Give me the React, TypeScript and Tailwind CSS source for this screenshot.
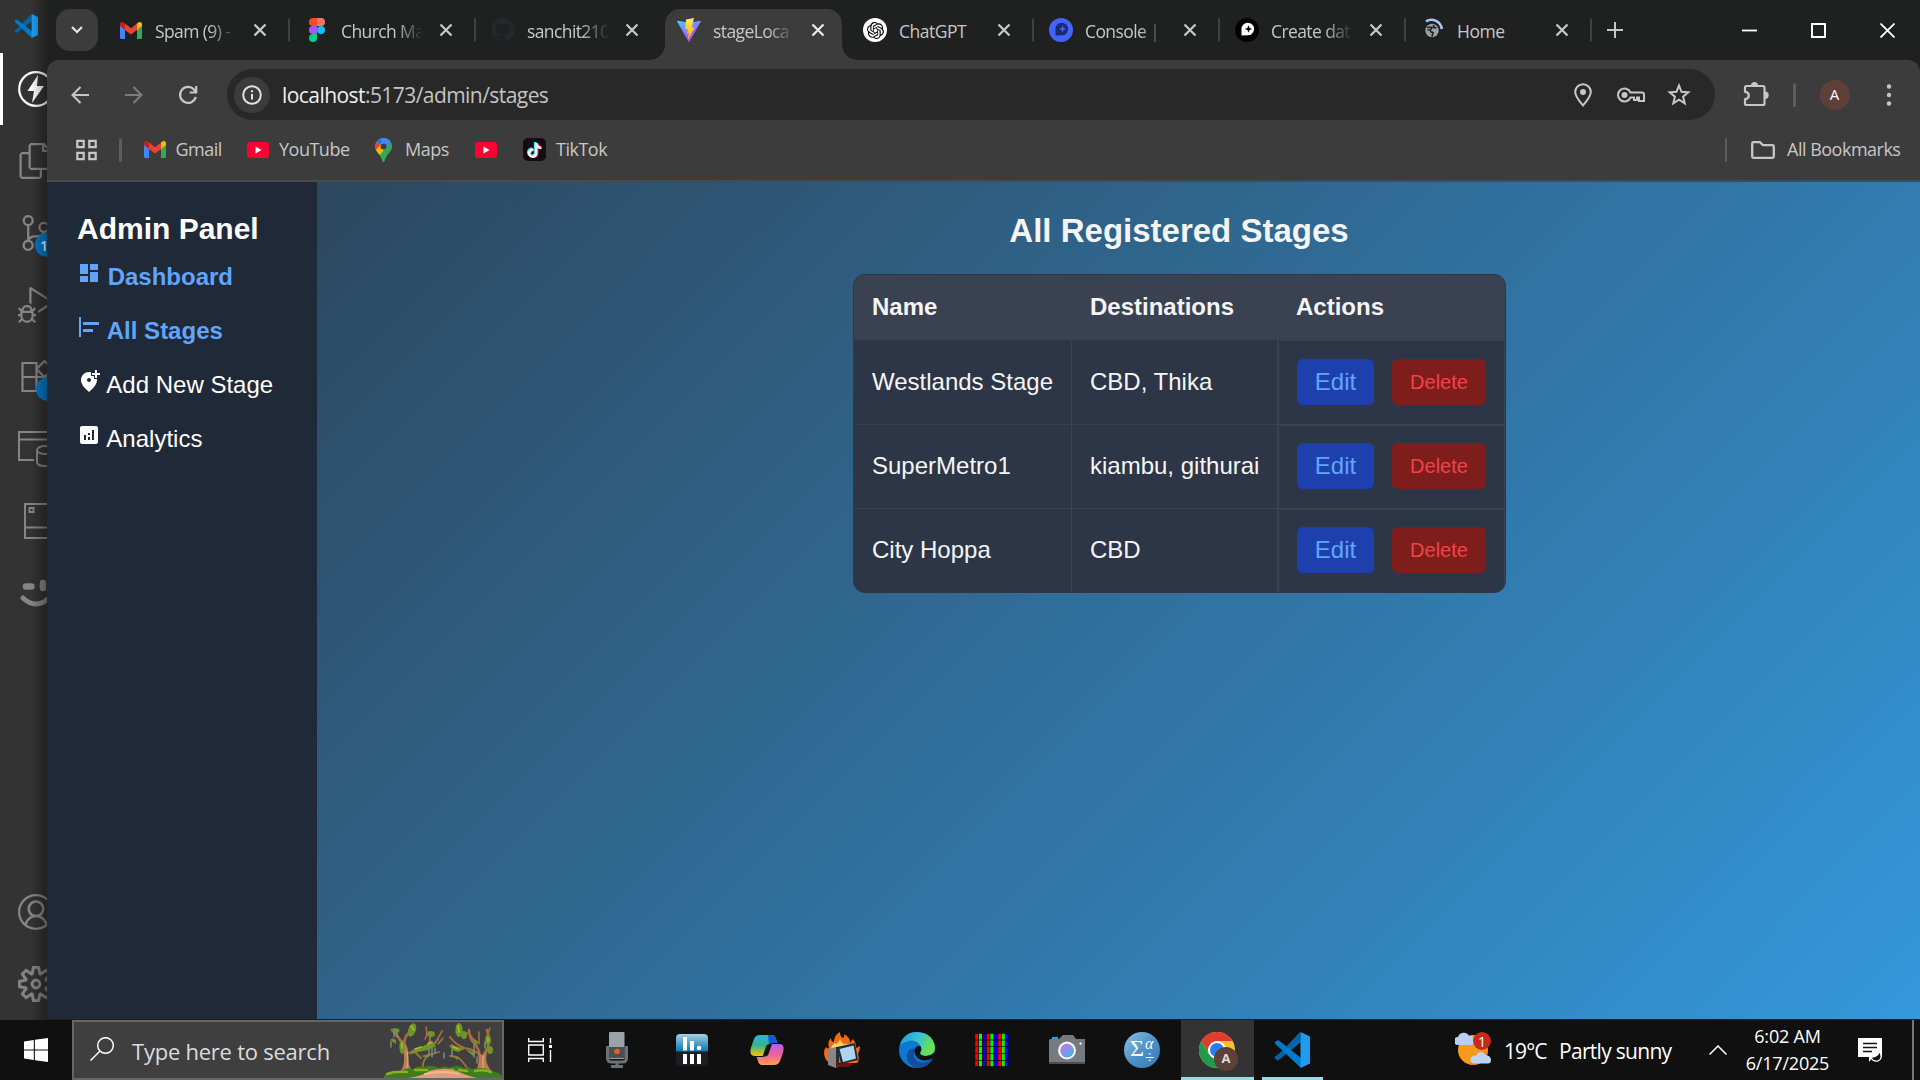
import React from "react";
import { VscFiles, VscSourceControl, VscDebugAlt, VscAccount, VscSettingsGear } from "react-icons/vsc";
import { MdDashboard, MdAlignHorizontalLeft, MdAddLocationAlt, MdAnalytics } from "react-icons/md";
import { FaGithub, FaTiktok } from "react-icons/fa";
import { SiOpenai } from "react-icons/si";

const VSCode = ({ className }: { className: string }) => (
  <svg viewBox="0 0 36 36" className={className}>
    <path d="M26 0 10 17 4 22.500 1 24.500Q0 26 2 27.500L4 28.500 27 10Z" fill="#0065a9" />
    <path d="M27 36 2.500 13Q0 11 1.200 10L3 8.500Q4 8 5.500 9L27 26Z" fill="#007acc" />
    <path d="M26.500 0 36 4.500V31.500L26.500 36Z" fill="#1f9cf0" />
  </svg>
);

const Gmail = () => (
  <svg viewBox="0 0 22 17" className="h-[17px] w-[22px] shrink-0">
    <path d="M0 3v12.500Q0 17 1.500 17H5V7z" fill="#4285f4" />
    <path d="M22 3v12.500q0 1.500-1.500 1.500H17V7z" fill="#34a853" />
    <path d="M17 1.500V8l5-4V2.500C22 0 19.500-.5 18 .7z" fill="#fbbc04" />
    <path d="M5 8V1.500l6 4.700 6-4.700V8l-6 4.500z" fill="#ea4335" />
    <path d="M0 2.500V4l5 4V1.500L4 .7C2.500-.5 0 0 0 2.500z" fill="#c5221f" />
  </svg>
);

const Figma = () => (
  <svg viewBox="0 0 16 24" className="h-6 w-4">
    <path d="M8 0H4a4 4 0 0 0 0 8h4z" fill="#f24e1e" />
    <path d="M8 0h4a4 4 0 0 1 0 8H8z" fill="#ff7262" />
    <path d="M8 8H4a4 4 0 0 0 0 8h4z" fill="#a259ff" />
    <circle cx="12" cy="12" r="4" fill="#1abcfe" />
    <path d="M4 16h4v4a4 4 0 1 1-4-4z" fill="#0acf83" />
  </svg>
);

const Vite = () => (
  <svg viewBox="0 0 24 24" className="h-6 w-6">
    <defs>
      <linearGradient id="vt" x1="0" y1="0" x2=".6" y2="1">
        <stop stopColor="#41d1ff" />
        <stop offset="1" stopColor="#bd34fe" />
      </linearGradient>
      <linearGradient id="vb" x1="0" y1="0" x2="0" y2="1">
        <stop stopColor="#ffea83" />
        <stop offset=".3" stopColor="#ffdd35" />
        <stop offset="1" stopColor="#ffa800" />
      </linearGradient>
    </defs>
    <path d="M23.800 3.600 12.600 23.600q-.6.800-1.200 0L.2 3.600Q-.1 2.600 1 2.700l11 2 11-2q1.100-.1.800.9z" fill="url(#vt)" />
    <path d="M17 0 9 1.600 8.300 11.500l2.600-.4-.9 4.400 2-.5-1.200 6 .6.200 6.400-12-3 .5z" fill="url(#vb)" />
  </svg>
);

const ChatGPT = () => (
  <span className="flex size-6 items-center justify-center rounded-full bg-white text-black">
    <SiOpenai size={17} />
  </span>
);

const MapPinBadge = ({ bg, fg, star }: { bg: string; fg: string; star: string }) => (
  <svg viewBox="0 0 24 24" className="h-6 w-6">
    <circle cx="12" cy="12" r="12" fill={bg} />
    <path d="M6.500 17.500V11a6.300 6.300 0 1 1 6.300 6.300z" fill={fg} />
    <path d="m13.500 7.300 1.100 2.600 2.600 1.100-2.600 1.100-1.100 2.600-1.100-2.600L9.800 11l2.600-1.100z" fill={star} />
  </svg>
);

const Loading = () => (
  <svg viewBox="0 0 24 24" className="h-6 w-6">
    <circle cx="11" cy="12.500" r="6.700" fill="#9aa0a6" />
    <path d="M6 9.500q3-.5 5 0l-1.500 2.500h-3M9 13.500l3 1-1 4M12.500 7l.5 2.500 2.500.5" stroke="#202222" strokeWidth="1.700" fill="none" />
    <path d="M5 3.300A10.500 10.500 0 0 1 20.800 11" stroke="#a8c7fa" strokeWidth="2.600" fill="none" />
  </svg>
);

const YouTube = () => (
  <svg viewBox="0 0 22 16" className="h-4 w-[22px] shrink-0">
    <rect width="22" height="16" rx="3" fill="#ff0033" />
    <path d="m8.500 4.500 6 3.500-6 3.500z" fill="#fff" />
  </svg>
);

const Maps = () => (
  <svg viewBox="0 0 17 24" className="h-6 w-[17px] shrink-0">
    <defs>
      <clipPath id="mp">
        <path d="M8.500 0A8.500 8.500 0 0 0 0 8.500c0 5 5.500 7 7.300 14q1.200 3 2.400 0C11.500 15.500 17 13.500 17 8.500A8.500 8.500 0 0 0 8.500 0z" />
      </clipPath>
    </defs>
    <g clipPath="url(#mp)">
      <path d="M0 0h17v24H0z" fill="#34a853" />
      <path d="M0 3 8 8 2 16H0z" fill="#ea4335" />
      <path d="M3 0h14v4L8 8 1.500 3z" fill="#4285f4" />
      <path d="M0 0h5l3 8-6-5z" fill="#1a73e8" />
      <path d="M12 8 4 18l-4-5 7-8z" fill="#fbbc04" />
      <path d="M17 4 4 19v6h13z" fill="#34a853" />
      <path d="m11 0 6 4-6 6z" fill="#4285f4" />
    </g>
    <circle cx="8.500" cy="8.500" r="3" fill="#3c3c3c" />
  </svg>
);

const TikTok = () => (
  <span className="relative flex size-[23px] shrink-0 items-center justify-center rounded-[5px] bg-[#150b12]">
    <FaTiktok size={15} className="absolute top-[4px] left-[3px] text-[#25f4ee]" />
    <FaTiktok size={15} className="absolute top-[5px] left-[4.500px] text-[#fe2c55]" />
    <FaTiktok size={15} className="absolute top-[4.500px] left-[3.700px] text-white" />
  </span>
);

const Cross = ({ active }: { active?: boolean }) => (
  <svg viewBox="0 0 14 14" className={active ? "h-3.5 w-3.5 shrink-0 text-[#e8e8e8]" : "h-3.5 w-3.5 shrink-0 text-[#c7c7c7]"}>
    <path d="m1.500 1.500 11 11m0-11-11 11" stroke="currentColor" strokeWidth="2.300" />
  </svg>
);

const tabs = [
  { label: "Spam (9) -", icon: <Gmail />, sep: true },
  { label: "Church Ma", icon: <Figma />, sep: true },
  { label: "sanchit210", icon: <FaGithub size={24} className="text-[#24292f]" />, sep: false },
  { label: "stageLoca", icon: <Vite />, sep: false, active: true },
  { label: "ChatGPT", icon: <ChatGPT />, sep: true },
  { label: "Console |", icon: <MapPinBadge bg="#4264fb" fg="#1d2a6b" star="#4264fb" />, sep: true },
  { label: "Create dat", icon: <MapPinBadge bg="#000" fg="#fff" star="#000" />, sep: true },
  { label: "Home", icon: <Loading />, sep: true },
];

const TabStrip = () => (
  <div className="flex h-[60px] bg-[#1f2120]">
    <div className="mt-[9px] ml-[9px] flex size-[42px] items-center justify-center rounded-[14px] bg-[#3c3c3c]">
      <svg viewBox="0 0 12 8" className="h-2 w-3">
        <path d="m1 1 5 5 5-5" stroke="#e6e6e6" strokeWidth="2.200" fill="none" />
      </svg>
    </div>
    <div className="ml-[6px] flex">
      {tabs.map((t) => (
        <div key={t.label} className="relative flex h-[60px] w-[186px] items-center pl-[15px]">
          {t.active && (
            <>
              <span className="absolute top-[9px] bottom-0 left-[3px] w-[177px] rounded-t-[15px] bg-[#3c3c3c]" />
              <span className="absolute bottom-0 left-[-12px] size-[15px] bg-[radial-gradient(circle_at_0_0,transparent_14.5px,#3c3c3c_15px)]" />
              <span className="absolute bottom-0 left-[180px] size-[15px] bg-[radial-gradient(circle_at_100%_0,transparent_14.5px,#3c3c3c_15px)]" />
            </>
          )}
          <span className="relative flex w-6 justify-center">{t.icon}</span>
          <span
            className={
              t.label.length > 8
                ? "relative ml-3 w-[82px] pt-[2px] text-[17.5px] leading-[26px] tracking-[-0.6px] whitespace-pre text-[#c7c7c7] [mask-image:linear-gradient(90deg,#000_66%,transparent_100%)]"
                : "relative ml-3 w-[82px] pt-[2px] text-[17.5px] leading-[26px] tracking-[-0.5px] whitespace-pre text-[#c7c7c7]"
            }
          >
            {t.label}
          </span>
          <span className="relative ml-[16px]">
            <Cross active={t.active} />
          </span>
          {t.sep && <span className="absolute top-[18px] right-0 h-6 w-[2.500px] rounded bg-[#3f4140]" />}
        </div>
      ))}
    </div>
    <svg viewBox="0 0 16 16" className="mt-[22px] ml-[15px] h-4 w-4">
      <path d="M8 0v16M0 8h16" stroke="#c7c7c7" strokeWidth="2" />
    </svg>
    <div className="mt-[23px] mr-[25px] ml-auto flex gap-[54px]">
      <svg viewBox="0 0 15 15" className="h-[15px] w-[15px]"><path d="M0 7.500h15" stroke="#fff" strokeWidth="1.800" /></svg>
      <svg viewBox="0 0 15 15" className="h-[15px] w-[15px]"><path d="M1 1h13v13H1z" stroke="#fff" strokeWidth="2" fill="none" /></svg>
      <svg viewBox="0 0 15 15" className="h-[15px] w-[15px]"><path d="m.5.500 14 14m0-14-14 14" stroke="#fff" strokeWidth="1.800" /></svg>
    </div>
  </div>
);

const Toolbar = () => (
  <div className="flex h-[69px] items-start pt-[9px]">
    <div className="flex h-[51px] items-center gap-[35.5px] pl-[24px]">
      <svg viewBox="0 0 18 18" className="h-[18px] w-[18px]"><path d="M18 9H1.500M9.500 1 1.500 9l8 8" stroke="#c7c7c7" strokeWidth="2.100" fill="none" /></svg>
      <svg viewBox="0 0 18 18" className="h-[18px] w-[18px]"><path d="M0 9h16.500M8.500 1l8 8-8 8" stroke="#7c7c7c" strokeWidth="2.100" fill="none" /></svg>
      <svg viewBox="0 0 20 20" className="h-5 w-5"><path d="M17.800 12A8 8 0 1 1 16 4.500L18 7M18.200 1v6.500h-6.500" stroke="#c7c7c7" strokeWidth="2.200" fill="none" /></svg>
    </div>
    <div className="ml-[29px] flex h-[51px] w-[1488px] items-center rounded-full bg-[#282828] pr-[24px] pl-[7px]">
      <span className="flex size-9 items-center justify-center rounded-full bg-[#3c3c3c]">
        <svg viewBox="0 0 20 20" className="h-5 w-5">
          <circle cx="10" cy="10" r="8.800" stroke="#e3e3e3" strokeWidth="2" fill="none" />
          <path d="M10 9v5.500M10 5.200v2" stroke="#e3e3e3" strokeWidth="2" />
        </svg>
      </span>
      <span className="ml-[12px] text-[21px] leading-[30px] tracking-[-0.56px] text-[#c4c4c4]">
        <span className="text-[#f0f0f0]">localhost</span>:5173/admin/stages
      </span>
      <div className="ml-auto flex items-center">
        <svg viewBox="0 0 18 24" className="h-6 w-[18px]">
          <path d="M9 22.500C5 17.500 1.200 13.500 1.200 9a7.800 7.800 0 0 1 15.600 0c0 4.500-3.800 8.500-7.800 13.500z" stroke="#c7c7c7" strokeWidth="2" fill="none" />
          <circle cx="9" cy="9" r="3" fill="#c7c7c7" />
        </svg>
        <svg viewBox="0 0 28 16" className="ml-[25px] h-4 w-7">
          <path d="M13.500 5.500H25q2 0 2 2V14h-5v-3.500h-2V13h-3v-2.500h-3.500A6.500 6.500 0 1 1 13.500 5.500z" stroke="#c7c7c7" strokeWidth="2" fill="none" />
          <circle cx="7.500" cy="8" r="3" fill="#c7c7c7" />
        </svg>
        <svg viewBox="0 0 24 24" className="ml-[22px] h-[25px] w-[24px]">
          <path d="m12 3 2.500 6.300 6.800.5-5.200 4.400 1.600 6.600L12 17.200l-5.700 3.600 1.600-6.600-5.200-4.400 6.800-.5z" stroke="#c7c7c7" strokeWidth="2" fill="none" />
        </svg>
      </div>
    </div>
    <div className="flex h-[51px] items-center">
      <svg viewBox="0 0 26 26" className="-mt-[2px] ml-[28px] h-[26px] w-[26px]">
        <path d="M3.500 5H20q1.500 0 1.500 1.500v16q0 1.500-1.500 1.500H3.500Q2 24 2 22.500v-4.200q3.800-.8 3.800-3.900T2 10.600V6.500Q2 5 3.500 5z" stroke="#c7c7c7" strokeWidth="2.200" fill="none" />
        <path d="M8 4.500a3.500 3.500 0 0 1 7 0zM22 10.500a3.700 3.700 0 0 1 0 7.400z" fill="#c7c7c7" />
      </svg>
      <span className="ml-[24px] h-6 w-[2.500px] rounded bg-[#5c5c5c]" />
      <span className="ml-[24px] flex size-[30px] items-center justify-center rounded-full bg-[#5d4037] text-[15px] text-white">A</span>
      <svg viewBox="0 0 6 22" className="ml-[36px] h-[22px] w-[6px] fill-[#c7c7c7]">
        <circle cx="3" cy="2.500" r="2.200" />
        <circle cx="3" cy="11" r="2.200" />
        <circle cx="3" cy="19.500" r="2.200" />
      </svg>
    </div>
  </div>
);

const Bookmarks = () => (
  <div className="flex h-[51px] items-center pr-[19px] pb-[10px] pl-[29px] text-[18px] tracking-[-0.5px] text-[#c7c7c7]">
    <svg viewBox="0 0 21 21" className="h-[22px] w-[21px]">
      <path d="M1.300 1.300h6.400v6.400H1.300zM13.300 1.300h6.400v6.400h-6.400zM1.300 13.300h6.400v6.400H1.300zM13.300 13.300h6.400v6.400h-6.400z" stroke="#c7c7c7" strokeWidth="2.200" fill="none" />
    </svg>
    <span className="mr-[22.5px] ml-[22px] h-6 w-[2.500px] rounded bg-[#5c5c5c]" />
    <Gmail />
    <span className="ml-[9.5px] w-[71.5px] pb-px">Gmail</span>
    <YouTube />
    <span className="ml-[10px] w-[96px] pb-px">YouTube</span>
    <Maps />
    <span className="ml-[13px] w-[70px] pb-px">Maps</span>
    <YouTube />
    <span className="w-[26px]" />
    <TikTok />
    <span className="ml-[10px] pb-px tracking-[-0.5px]">TikTok</span>
    <span className="ml-auto h-6 w-[2.500px] rounded bg-[#5c5c5c]" />
    <svg viewBox="0 0 24 18" className="mr-[12px] ml-[24px] h-[18px] w-6">
      <path d="M1.200 2.500q0-1.300 1.300-1.300H9l3 3h9.500q1.300 0 1.300 1.300v10q0 1.300-1.300 1.300h-19q-1.300 0-1.300-1.300z" stroke="#c7c7c7" strokeWidth="2.300" fill="none" />
    </svg>
    <span className="w-[114px] pb-px whitespace-nowrap">All Bookmarks</span>
  </div>
);

const nav = [
  { label: "Dashboard", Icon: MdDashboard, on: true },
  { label: "All Stages", Icon: MdAlignHorizontalLeft, on: true },
  { label: "Add New Stage", Icon: MdAddLocationAlt, on: false },
  { label: "Analytics", Icon: MdAnalytics, on: false },
];

const stages = [
  { name: "Westlands Stage", dest: "CBD, Thika" },
  { name: "SuperMetro1", dest: "kiambu, githurai" },
  { name: "City Hoppa", dest: "CBD" },
];

const Page = () => (
  <div className="flex h-[837px] bg-linear-[135deg,#2c3e50,#3498db] font-['Liberation_Sans',Arial,sans-serif] text-[24px]">
    <aside className="w-[270px] bg-[#1f2937] pt-[29px] pl-[30px]">
      <h2 className="text-[30px] leading-[36px] font-bold text-white">Admin Panel</h2>
      <nav className="mt-[3px] flex flex-col">
        {nav.map(({ label, Icon, on }) => (
          <a
            key={label}
            className={on ? "h-[54px] leading-[54px] font-bold whitespace-nowrap text-[#60a5fa]" : "h-[54px] leading-[54px] whitespace-nowrap text-white"}
          >
            <Icon size={24} className="inline align-baseline" /> {label}
          </a>
        ))}
      </nav>
    </aside>
    <main className="flex flex-1 flex-col items-center pt-[30px] pr-[-1px] text-[#f5f5f5]">
      <h1 className="ml-[121px] text-[33px] leading-[38px] font-bold">All Registered Stages</h1>
      <div className="mt-[24px] ml-[122px] w-[653px] overflow-hidden rounded-[12px] border border-[#2d3748] bg-[#2d3748]">
        <div className="grid h-[65px] grid-cols-[218px_206px_1fr] items-center bg-[#3a4252] pb-[2px] font-bold">
          <span className="pl-[18px]">Name</span>
          <span className="pl-[18px]">Destinations</span>
          <span className="pl-[18px]">Actions</span>
        </div>
        {stages.map((s, i) => (
          <div key={s.name} className="grid h-[84px] grid-cols-[218px_205px_1fr] bg-[#2d3647]">
            <span className={i ? "flex items-center border-t border-r border-[#3a4252] pb-[2px] pl-[18px]" : "flex items-center border-r border-[#3a4252] pb-px pl-[18px]"}>{s.name}</span>
            <span className={i ? "flex items-center border-t border-[#3a4252] pb-[2px] pl-[18px]" : "flex items-center pb-px pl-[18px]"}>{s.dest}</span>
            <span className={i === 0 ? "flex items-start gap-[18px] border-t border-r border-l-2 border-[#3a4252] pt-[18px] pl-[18px]" : "flex items-start gap-[18px] border-t-2 border-r border-l-2 border-[#3a4252] pt-[17px] pl-[18px]"}>
              <span className="flex h-[46px] w-[77px] items-center justify-center rounded-[6px] bg-[#1e40af] text-[#60a5fa]">Edit</span>
              <span className="flex h-[46px] w-[94px] items-center justify-center rounded-[6px] bg-[#7f1d1d] text-[20px] text-[#ef4444]">Delete</span>
            </span>
          </div>
        ))}
      </div>
    </main>
  </div>
);

const ActivityBar = () => (
  <div className="relative flex h-[1020px] w-[47px] shrink-0 flex-col overflow-hidden bg-[#333333] text-[#858585]">
    <div className="flex h-[53px] items-center pb-px pl-[14px]"><VSCode className="h-6 w-6 shrink-0" /></div>
    <div className="flex h-[72px] items-center border-l-[3px] border-white pl-[15px]">
      <svg viewBox="0 0 36 36" className="h-9 w-9 shrink-0">
        <circle cx="18" cy="18" r="16.800" stroke="#fff" strokeWidth="2.200" fill="none" />
        <path d="M20 4 9.500 20H16l-2 12 12-17h-7z" fill="#fff" />
      </svg>
    </div>
    <div className="flex h-[72px] items-center pl-[18px]"><VscFiles size={36} className="shrink-0" /></div>
    <div className="relative flex h-[72px] items-center pl-[18px]">
      <VscSourceControl size={36} className="shrink-0" />
      <span className="absolute top-[36px] left-[35px] flex size-6 items-center rounded-full bg-[#007acc] pl-[5px] text-[14px] font-semibold text-white">1</span>
    </div>
    <div className="flex h-[72px] items-center pl-[18px]"><VscDebugAlt size={36} className="shrink-0" /></div>
    <div className="relative flex h-[72px] items-center pl-[21px]">
      <svg viewBox="0 0 36 36" className="h-9 w-9 shrink-0" fill="none" stroke="#858585" strokeWidth="2.200">
        <path d="M1.500 4h14v28h-14zM1.500 18h28v14h-14V18M23.500 2l8 8-8 8-8-8z" />
      </svg>
      <span className="absolute top-[36px] left-[36px] size-6 rounded-full bg-[#007acc]" />
    </div>
    <div className="flex h-[72px] items-center pl-[18px]">
      <svg viewBox="0 0 36 36" className="h-9 w-9 shrink-0" fill="none" stroke="#858585" strokeWidth="2">
        <path d="M16 29H1V1h34v14M1 8.500h34" />
        <ellipse cx="27" cy="19" rx="8" ry="4" />
        <path d="M19 19v12q0 4 8 4t8-4V19" />
      </svg>
    </div>
    <div className="flex h-[72px] items-center pl-[24px]">
      <svg viewBox="0 0 36 36" className="h-9 w-9 shrink-0" fill="none" stroke="#858585" strokeWidth="2">
        <path d="M1 1h34v34H1zM1 24.500h34M5.500 5h4v4h-4z" />
      </svg>
    </div>
    <div className="flex h-[72px] items-center pb-[7px] pl-[18px]">
      <svg viewBox="0 0 36 36" className="h-9 w-9 shrink-0" fill="none" stroke="#858585" strokeLinecap="round">
        <path d="M8 14.500h5.500M25 11v5" strokeWidth="6.500" />
        <path d="M5 26q13 12 26 0" strokeWidth="5" />
      </svg>
    </div>
    <div className="mt-auto flex h-[72px] items-center pl-[18px]"><VscAccount size={36} className="shrink-0" /></div>
    <div className="flex h-[72px] items-center pl-[18px]">
      <VscSettingsGear size={36} className="shrink-0" stroke="#858585" strokeWidth={0.3} />
    </div>
    <span className="absolute inset-y-0 right-0 w-4 bg-linear-to-r from-transparent to-black/35" />
  </div>
);

const Swamp = () => (
  <svg viewBox="0 0 120 56" className="mr-[-1px] ml-auto h-[56px] w-[120px] self-end" fill="none" strokeLinecap="round" strokeLinejoin="round">
    <g stroke="#a86b42">
      <path d="M40 46q-1-8 6-13l10-3M38 36l-5-5M84 46q-5-8-10-11l-7-1" strokeWidth="1.800" />
      <path d="M24 32q7-4 12-5 14-1 19-10M40 26q8-3 7-11M96 32q-6-4-10-5-12-2-19-12M80 27q-8-1-11-4" strokeWidth="2" />
      <path d="M21 26Q16 14 9 8M21 24q0-10 6-14M97 34q-2-10-7-14-4-6-4-12M101 32q8-10 3-24" strokeWidth="2.600" />
      <path d="M42 17q3-4 1-12M54 18l5-9M60 16l-5 6M92 20l-6-9h-6M104 14l3-8M96 22V10" strokeWidth="1.600" />
    </g>
    <path d="M17 50q5-6 4-16-1-7-3-12l4-1q4 6 3 12 0 12 5 17zM93 49q4-8 2-19l4 3 5-3q-3 10 4 19z" fill="#bd7c52" />
    <path d="M23 48q3-8 1-18M100 48V34" stroke="#dba37a" strokeWidth="1.400" />
    <g fill="#6f9428">
      <ellipse cx="29" cy="8" rx="3.800" ry="7" transform="rotate(20 29 8)" />
      <ellipse cx="19" cy="25" rx="2.600" ry="7" />
      <ellipse cx="76" cy="8" rx="3.600" ry="7" />
      <ellipse cx="81" cy="13" rx="3" ry="4" />
      <ellipse cx="48" cy="12" rx="4" ry="3" />
      <ellipse cx="105" cy="18" rx="3" ry="4.500" />
      <ellipse cx="107" cy="28" rx="3" ry="4" />
      <path d="M26 33q6-7 14-9l10-4 3 4-8 4-10 2zM8 8q4-4 9 0l-2 3zM7 18q2-3 6 0v4zM66 23q8 1 14 4l-4 3q-8-1-10-7zM82 27l10 4-2 3zM90 16l6 4-3 3zM38 34l8-2-2 4zM70 34l6 1-2 3z" />
    </g>
    <g stroke="#b3b52e" strokeWidth="1.600">
      <path d="M28 4l3 4M75 4l1 6M32 27l6-2M45 22l4-2M19 21v5M105 16v3M70 25l5 2" />
    </g>
    <g stroke="#7f9c86" strokeWidth="1.300">
      <path d="M11 10v5M14 9v6M8 20v5M46 27v7M49 26v9M52 26v5M61 31v5M69 28v6M91 23v12M94 35v6M102 20v6" />
    </g>
    <path d="M0 56q3-8 18-7 4-4 12-2 6-4 12-2 6-3 14 1 6-3 10 0 8-4 15 0 5-2 8 1 14-3 18 2 11 1 13 7z" fill="#3d7d1e" />
    <path d="M4 52q8-3 20-2M32 48h12M60 48h10M76 48l8 1M92 49q10-2 16 1" stroke="#92aa25" strokeWidth="2.600" />
    <path d="M26 56q16-3 20-7 14-4 28 0 8 4 20 7z" fill="#e09b78" />
    <path d="M42 52q18-4 34 0" stroke="#f2b796" strokeWidth="1.800" />
  </svg>
);

const Taskbar = () => (
  <div className="flex h-[60px] bg-[#101010] text-white">
    <div className="flex w-[72px] items-center justify-center">
      <svg viewBox="0 0 24 24" className="h-6 w-6" fill="#fff">
        <path d="M0 3.400 9.800 2v9.400H0zM10.900 1.800 24 0v11.400H10.900zM0 12.500h9.800V22L0 20.600zM10.900 12.500H24V24l-13.100-1.800z" />
      </svg>
    </div>
    <div className="flex w-[432px] items-center border-2 border-[#666] bg-[#3f3f3f] pl-[16px]">
      <svg viewBox="0 0 24 24" className="-mt-[2px] h-6 w-6">
        <circle cx="15.500" cy="8.500" r="7.800" stroke="#fff" strokeWidth="1.500" fill="none" />
        <path d="M10 14 .5 23.500" stroke="#fff" strokeWidth="1.500" />
      </svg>
      <span className="ml-[18px] pt-[2px] text-[22px] leading-[30px] tracking-[-0.24px] whitespace-nowrap text-[#dcdcdc]">Type here to search</span>
      <Swamp />
    </div>
    <div className="flex items-center pl-[24px]">
      <svg viewBox="0 0 24 24" className="h-6 w-6" fill="none" stroke="#fff" strokeWidth="1.400">
        <path d="M.7 0v3.500h14.600V0M.7 7h14.600v10H.7zM.7 24v-3.500h14.600V24M22.500 0v5.500M22.500 12v12" />
        <path d="M21 7h3v3h-3z" fill="#fff" stroke="none" />
      </svg>
      <svg viewBox="0 0 22 36" className="ml-[53.5px] h-9 w-[22px]">
        <path d="M1.500 14v12q0 4 4 4h11q4 0 4-4V14M11 30v5M5 34.500h12" stroke="#68727a" strokeWidth="3" fill="none" />
        <rect x="3" width="15.500" height="27" rx="1" fill="#9aa3aa" />
        <path d="M3 15h15.500v11H3z" fill="#4a4f54" />
        <circle cx="11" cy="19.500" r="2.800" fill="#f15a22" />
      </svg>
      <svg viewBox="0 0 32 32" className="ml-[48.5px] h-8 w-8">
        <defs><linearGradient id="bl" x1="0" y1="0" x2="0" y2="1"><stop stopColor="#a4cfe8" /><stop offset="1" stopColor="#0677ae" /></linearGradient></defs>
        <rect width="32" height="32" rx="4" fill="#1c1f21" />
        <path d="M4 0h24q4 0 4 4v13.500H0V4q0-4 4-4z" fill="url(#bl)" />
        <path d="M9 3v13.500M16 7v9.500M9 20v10M16 20v10M23 20v10" stroke="#fff" strokeWidth="4" />
        <circle cx="23" cy="14" r="2.300" fill="#fff" />
      </svg>
      <svg viewBox="0 0 34 32" className="ml-[42px] h-8 w-[34px]">
        <defs>
          <linearGradient id="c1" x1="0" y1="0" x2="0" y2="1"><stop stopColor="#29b6e8" /><stop offset=".5" stopColor="#34b48a" /><stop offset="1" stopColor="#f6c500" /></linearGradient>
          <linearGradient id="c2" x1="0" y1="0" x2="0" y2="1"><stop stopColor="#b45cf0" /><stop offset=".5" stopColor="#f0609a" /><stop offset="1" stopColor="#ffa24d" /></linearGradient>
        </defs>
        <path d="M10 1h12q3 0 4 4l1.500 4h-5Q19 9 18 12l-3.500 10H5Q-2 22 1.500 12L4 5q1.500-4 6-4z" fill="url(#c1)" />
        <path d="M24 31H12q-3 0-4-4l-1.500-4h5q3.500 0 4.500-3L19.500 10H29q7 0 3.500 10L30 27q-1.500 4-6 4z" fill="url(#c2)" />
        <path d="M18 1h4q3 0 4 4l1.500 4h-5q-2.500 0-3.500 2z" fill="#1557d8" />
        <path d="M16.500 11.500q.5-1.500 3-1.500h2.500l-3.500 10q-1 2.500-3.500 2.500h-2.500z" fill="#141414" />
      </svg>
      <svg viewBox="0 0 36 36" className="ml-[40px] h-9 w-9">
        <path d="M2 28Q-2 20 2 15q2 3 3 0Q3 10 7 6q0 4 3 4 0-7 6-10 0 5 3 6 2-1 1-4 6 3 6 9l3-4q4 5 3 9l4-2q0 4-2 8 2 6-1 9H6z" fill="#f36a10" />
        <path d="M6 22q0-8 5-11 2 3 5-4 2 6 6 5 6 0 8 8z" fill="#ffd267" />
        <path d="m4 17 8-2v21l-8-3z" fill="#8c8584" />
        <path d="m12 15 3 0v21h-3z" fill="#302d2f" />
        <path d="m13 15 18-4 3 17-17 4z" fill="#1c2b38" />
        <path d="m15.500 17 14-3.500 2.500 13-13 3.500z" fill="#b0d3ee" />
        <path d="M13 33q8-4 17-1l-6 3H12z" fill="#6b1414" />
      </svg>
      <svg viewBox="0 0 36 36" className="ml-[39px] h-9 w-9">
        <defs>
          <linearGradient id="e1" x1="0" y1="0" x2="1" y2=".4"><stop stopColor="#1d96dd" /><stop offset=".5" stopColor="#35c1d6" /><stop offset="1" stopColor="#6be34b" /></linearGradient>
        </defs>
        <circle cx="18" cy="18" r="18" fill="#0c78d4" />
        <path d="M18 17q-4 2-3 8 3 7 12 5 5-2 7-4-5 10-16 10Q7 33 8 23q1-8 10-6z" fill="#114f9c" />
        <path d="M1 13Q5 0 18 0q16 1 18 15 0 8-9 9-6 0-6-3 3-4 0-8Q14 4 1 13z" fill="url(#e1)" />
        <path d="M17 15q3-2 5 0 1 3-1 6 1 3 6 3 6-.5 9-4v5l-3 2Q22 31 17 24q-3-5 0-9z" fill="#101010" />
      </svg>
      <svg viewBox="0 0 34 34" className="ml-[40px] h-[34px] w-[34px]">
        <rect width="34" height="34" fill="#000" />
        {[0, 1, 2].map((k) => (
          <g key={k}>
            <rect x={k * 11.5 + 0.2} width="3" height="34" fill="#f00" />
            <rect x={k * 11.4 + 4} width="3" height="34" fill="#0f0" />
            <rect x={k * 11.2 + 8} width="3" height="34" fill="#00f" />
          </g>
        ))}
        <path d="M0 .5h34M0 7h34M0 13.500h34M0 20.500h34M0 27.500h34M0 33.500h34" stroke="#000" strokeWidth=".7" />
      </svg>
      <svg viewBox="0 0 36 30" className="ml-[40px] h-[30px] w-9">
        <path d="M3 4V2h6v2z" fill="#2ba4dd" />
        <path d="M2 4h8l4-4h10l3 4h9v25H0V5q0-1 2-1z" fill="#747a7f" />
        <path d="M0 27h36v2H0z" fill="#4b5054" />
        <circle cx="18" cy="15.500" r="9" fill="#f4f4f4" />
        <circle cx="18" cy="15.500" r="6.700" fill="#a385ea" />
        <path d="M12.500 19.500 23 11.200q3.500 5 0 9-6 5-10.500-.7z" fill="#62a4ec" />
        <path d="M31.500 7v3M30 8.500h3" stroke="#ddd" />
      </svg>
      <span className="ml-[39px] flex size-9 rounded-full bg-linear-to-br from-[#8fc1e2] via-[#4d92c8] to-[#3878b8] pl-[6px] font-['Liberation_Serif',serif]">
        <span className="w-[15px] pt-[4px] text-[24px] leading-[24px]">Σ</span>
        <span className="flex flex-col pt-[3px]">
          <span className="h-[15px] text-[16px] leading-[18px] italic">α</span>
          <span className="h-[12px] text-[17px] leading-[16px]">÷</span>
        </span>
      </span>
      <span className="relative ml-[21px] flex h-[60px] w-[73px] items-center justify-center border-b-[3px] border-[#8fe0e4] bg-[#333] pr-px pt-[3px]">
        <svg viewBox="0 0 36 36" className="h-9 w-9">
          <circle cx="18" cy="18" r="18" fill="#fbc22e" />
          <path d="M2.400 9A18 18 0 0 1 33.600 9H18z" fill="#e33b2e" />
          <path d="M2.400 9A18 18 0 0 0 18 36l8-13.500-16 0z" fill="#229a4d" />
          <path d="M2.400 9 10.500 22.500 18 9z" fill="#229a4d" />
          <path d="M2.400 9 9 19l4-6 5-4z" fill="#e33b2e" />
          <circle cx="18" cy="18" r="9" fill="#fff" />
          <circle cx="18" cy="18" r="7" fill="#2a7df0" />
        </svg>
        <span className="absolute top-[27px] left-[33px] flex size-6 items-center justify-center rounded-full bg-[#5d4037] text-[13px] font-bold text-[#ddd]">A</span>
      </span>
      <span className="ml-[8px] flex h-[60px] w-[61px] items-center justify-center border-b-[3px] border-[#8fe0e4] pt-[3px] pr-px">
        <VSCode className="h-9 w-9" />
      </span>
    </div>
    <div className="ml-auto flex items-center text-[21.500px]">
      <span className="relative mr-[13px]">
        <svg viewBox="0 0 36 36" className="h-9 w-9">
          <circle cx="18" cy="18" r="15" fill="#f69a1c" />
          <path d="M14 32.500A15 15 0 0 0 33 18z" fill="#f47a13" />
          <path d="M3 13a4 4 0 0 1 0-8 6 6 0 0 1 11-1q4-1 4 3 4 5-2 6z" fill="#b9cef5" />
          <path d="M18 31.500a4 4 0 0 1 0-7.500q2-1 3 0a5.500 5.500 0 0 1 10-1q5 1 5 5t-4 3.500z" fill="#bfd3f7" />
        </svg>
        <span className="absolute top-0 left-[18px] flex size-[18px] items-center justify-center rounded-full bg-[#c42b1c] text-[14px]">1</span>
      </span>
      <span className="w-[55px] pt-[3px] text-[21px] tracking-[-0.9px] whitespace-nowrap">19°C</span>
      <span className="w-[150px] pt-[3px] text-[21px] tracking-[-0.7px] whitespace-nowrap">Partly sunny</span>
      <svg viewBox="0 0 18 10" className="h-[10px] w-[18px]"><path d="m.5 9.500 8.500-8.500 8.500 8.500" stroke="#fff" strokeWidth="1.500" fill="none" /></svg>
      <span className="ml-[15px] flex w-[90px] flex-col items-center pl-px text-[18px] leading-[27px] tracking-[-0.2px] whitespace-nowrap">
        <span>6:02 AM</span>
        <span>6/17/2025</span>
      </span>
      <svg viewBox="0 0 24 24" className="ml-[26px] h-6 w-6">
        <path d="M0 0h24v19h-9l-4 5v-5H0z" fill="#fff" />
        <path d="M5 5.500h14M5 9.500h14M5 13.500h9" stroke="#101010" strokeWidth="1.300" />
        <path d="M20.500 12q2 6-7.500 7.500 2 4.500 7 3.500 6-3 .5-11z" fill="#101010" stroke="#fff" strokeWidth="1.200" />
      </svg>
      <span className="mr-[6px] ml-[30px] h-[60px] w-[2px] bg-[#777]" />
    </div>
  </div>
);

export default function App() {
  return (
    <div className="h-[1080px] w-[1920px] overflow-hidden bg-[#101010] font-['Open_Sans','Noto_Sans',sans-serif]">
      <div className="flex h-[1020px]">
        <ActivityBar />
        <div className="flex w-[1873px] flex-col bg-[#1f2120]">
          <TabStrip />
          <div className="h-[122px] rounded-t-[12px] border-b-2 border-[#4a4a4a] bg-[#3c3c3c]">
            <Toolbar />
            <Bookmarks />
          </div>
          <Page />
        </div>
      </div>
      <Taskbar />
    </div>
  );
}
